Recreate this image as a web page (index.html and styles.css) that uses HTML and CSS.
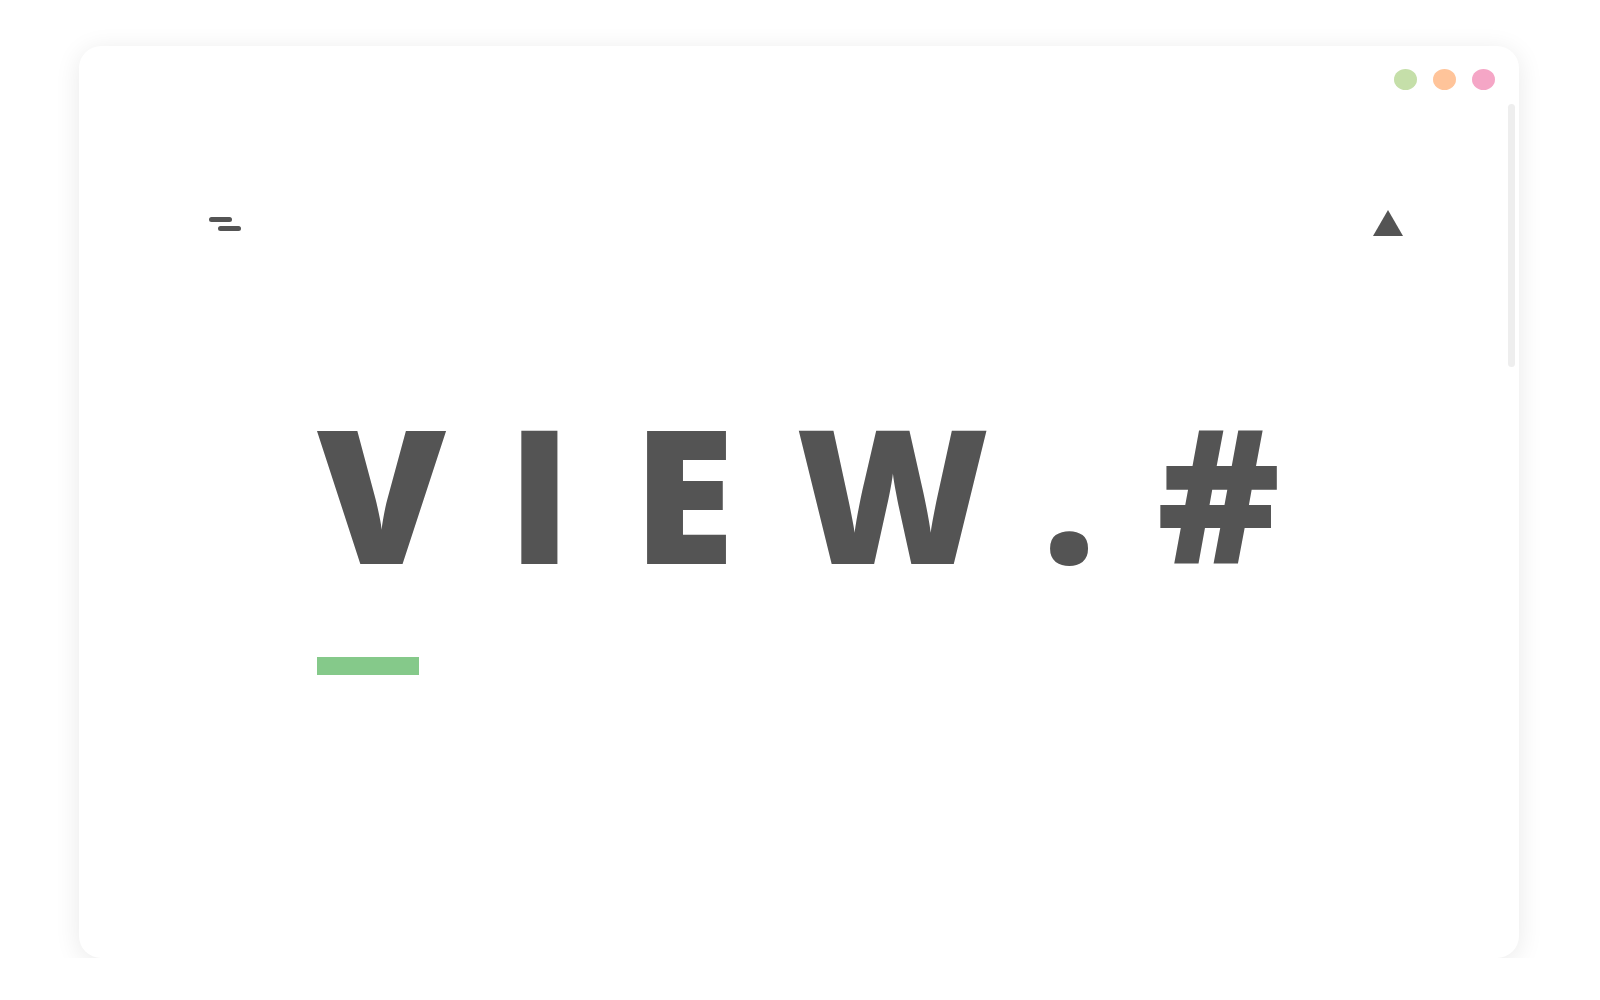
FILE: index.html
```html
<!DOCTYPE html>
<html lang="en">
<head>
<meta charset="utf-8">
<title>VIEW.#</title>
<link rel="stylesheet" href="styles.css">
</head>
<body>
<div class="card">
  <div class="controls">
    <span class="dot dot-green"></span>
    <span class="dot dot-orange"></span>
    <span class="dot dot-pink"></span>
  </div>
  <div class="scrollbar"></div>
  <nav class="nav">
    <svg class="menu" width="32" height="14" viewBox="0 0 32 14">
      <rect x="0" y="0" width="23" height="5" rx="2.5" fill="#545454"/>
      <rect x="9" y="9" width="23" height="5" rx="2.5" fill="#545454"/>
    </svg>
    <svg class="up" width="30" height="26" viewBox="0 0 30 26">
      <polygon points="15,0 30,26 0,26" fill="#545454"/>
    </svg>
  </nav>
  <main class="hero">
    <h1 class="title">VIEW<span class="kern">.</span>#</h1>
    <div class="accent"></div>
  </main>
</div>
</body>
</html>
```

FILE: styles.css
```css
html, body {
  margin: 0;
  padding: 0;
  background: #ffffff;
}
body {
  padding: 46px 0 0 79px;
  font-family: "Open Sans", "Liberation Sans", sans-serif;
}
.card {
  position: relative;
  width: 1440px;
  height: 912px;
  background: #ffffff;
  border-radius: 22px;
  box-shadow: 0 4px 26px rgba(0, 0, 0, 0.09);
  display: flex;
  flex-direction: column;
  box-sizing: border-box;
}
.controls {
  display: flex;
  justify-content: flex-end;
  gap: 16px;
  padding: 23px 24px 0 0;
}
.dot {
  width: 23px;
  height: 21px;
  border-radius: 50%;
}
.dot-green { background: #c5dfa9; }
.dot-orange { background: #ffc49a; }
.dot-pink { background: #f5a6c6; }
.scrollbar {
  position: absolute;
  top: 58px;
  right: 4px;
  width: 7px;
  height: 263px;
  border-radius: 4px;
  background: #eeeeee;
}
.nav {
  display: flex;
  justify-content: space-between;
  align-items: flex-start;
  margin-top: 120px;
  padding: 0 116px 0 130px;
}
.menu, .up { display: block; }
.menu { margin-top: 7px; }
.hero {
  padding-left: 238px;
  margin-top: 163px;
}
.title {
  margin: 0;
  font-size: 186px;
  line-height: 186px;
  font-weight: 800;
  color: #545454;
  letter-spacing: 61px;
  font-kerning: normal;
}
.kern {
  margin-left: -8px;
}
.accent {
  margin-top: 72px;
  width: 102px;
  height: 18px;
  background: #85c98a;
}
```
